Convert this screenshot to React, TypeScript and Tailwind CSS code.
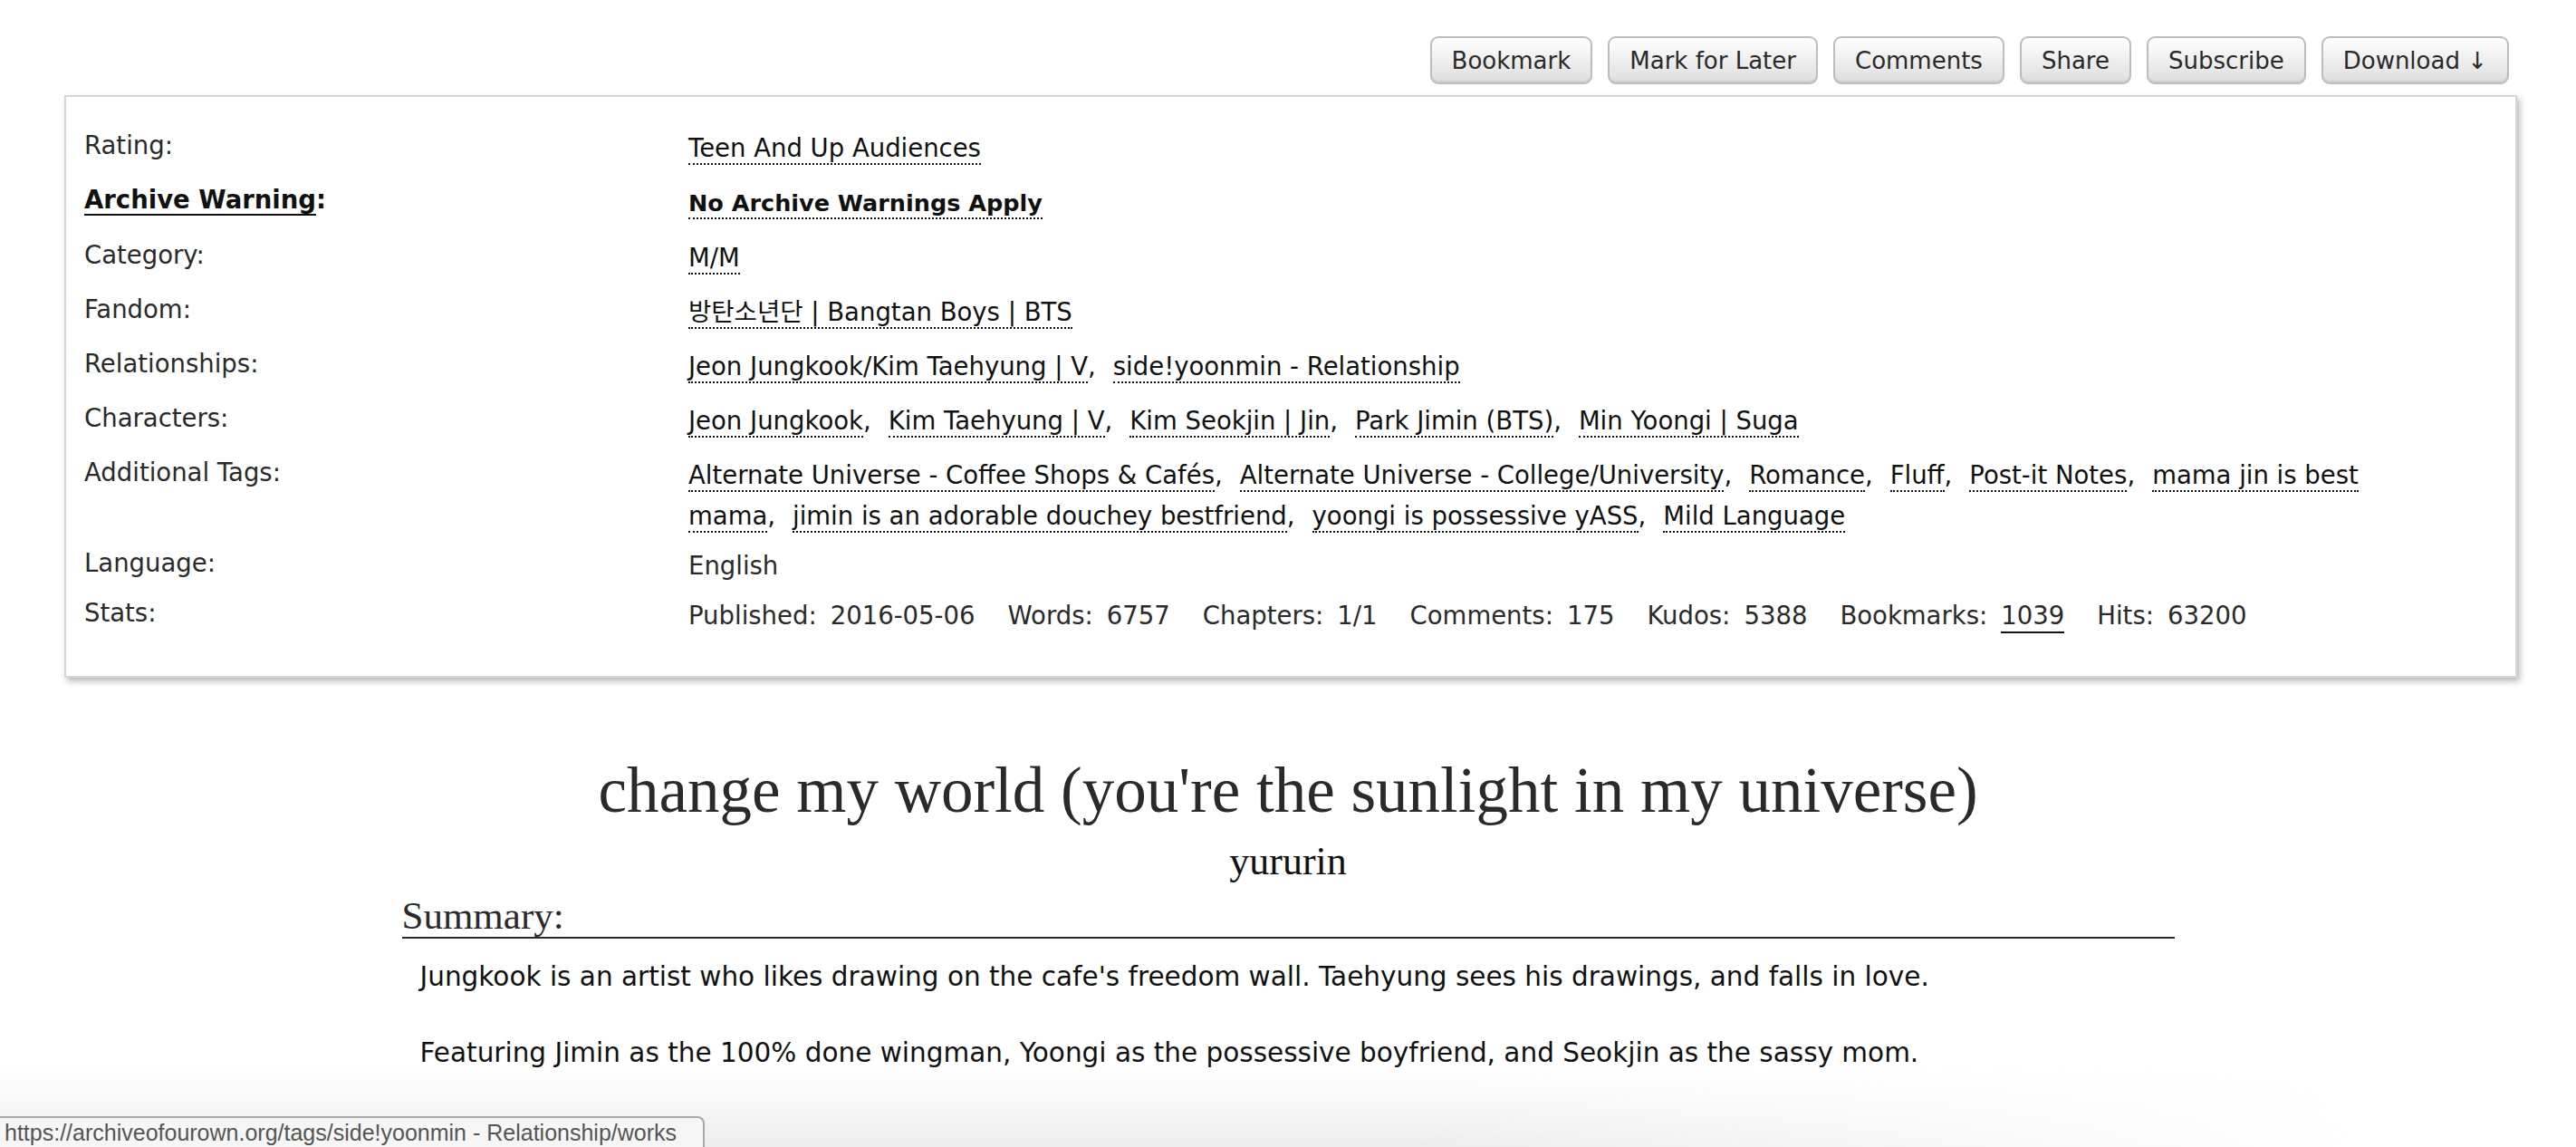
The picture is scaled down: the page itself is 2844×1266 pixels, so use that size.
import React from "react";

const sans = "font-['DejaVu_Sans','Noto_Sans_CJK_KR',sans-serif]";

function ActionButton({ label }: { label: string }) {
    return (
        <button
            type="button"
            className="flex h-[53px] items-center rounded-[9px] border-2 border-[#bdbdbd] bg-linear-to-b from-white to-[#dedede] px-[22px] text-[26px] leading-none text-[#2a2a2a] shadow-[inset_0_-2px_0_#cfcfcf]"
        >
            {label}
        </button>
    );
}

function Tag({ children, last }: { children: React.ReactNode; last?: boolean }) {
    return (
        <span className={last ? "whitespace-nowrap" : "mr-[19px] whitespace-nowrap"}>
            <a className="border-b-2 border-dotted border-[#111] pb-[1px] text-[#111]">{children}</a>
            {last ? null : ","}
        </span>
    );
}

function Row({
    label,
    children,
    className,
}: {
    label: React.ReactNode;
    children: React.ReactNode;
    className?: string;
}) {
    return (
        <div className={"grid grid-cols-[667px_1fr] " + (className ?? "mt-[12px]")}>
            <div className="leading-[45px] text-[#2a2a2a]">{label}</div>
            <div className="pt-[3px] leading-[45px] text-[#111]">{children}</div>
        </div>
    );
}

function Stat({ label, value, link }: { label: string; value: string; link?: boolean }) {
    return (
        <span className="mr-[36px] whitespace-nowrap">
            {label}
            <span className="ml-[15px]">
                {link ? <a className="border-b-2 border-solid border-[#111] pb-[2px]">{value}</a> : value}
            </span>
        </span>
    );
}

export default function App() {
    const buttons = ["Bookmark", "Mark for Later", "Comments", "Share", "Subscribe", "Download ↓"];

    return (
        <div className={`relative h-[1266px] w-[2844px] overflow-hidden bg-white text-[27.5px] text-[#2a2a2a] ${sans}`}>
            <div className="flex justify-end gap-[17px] pr-[74px] pt-[40px]">
                {buttons.map((b) => (
                    <ActionButton key={b} label={b} />
                ))}
            </div>

            <div className="ml-[71px] mt-[12px] w-[2708px] border-2 border-[#d6d6d6] bg-white pb-[44px] pl-[20px] pt-[31px] shadow-[3px_4px_7px_rgba(0,0,0,0.28)]">
                <Row label="Rating:" className="">
                    <Tag last>Teen And Up Audiences</Tag>
                </Row>
                <Row
                    label={
                        <span className="font-bold text-[#111]">
                            <span className="border-b-2 border-[#111]">Archive Warning</span>:
                        </span>
                    }
                >
                    <span className="text-[25.5px] font-bold">
                        <Tag last>No Archive Warnings Apply</Tag>
                    </span>
                </Row>
                <Row label="Category:">
                    <Tag last>M/M</Tag>
                </Row>
                <Row label="Fandom:">
                    <Tag last>방탄소년단 | Bangtan Boys | BTS</Tag>
                </Row>
                <Row label="Relationships:">
                    <Tag>Jeon Jungkook/Kim Taehyung | V</Tag>
                    <Tag last>side!yoonmin - Relationship</Tag>
                </Row>
                <Row label="Characters:">
                    <Tag>Jeon Jungkook</Tag>
                    <Tag>Kim Taehyung | V</Tag>
                    <Tag>Kim Seokjin | Jin</Tag>
                    <Tag>Park Jimin (BTS)</Tag>
                    <Tag last>Min Yoongi | Suga</Tag>
                </Row>
                <Row label="Additional Tags:">
                    <div className="whitespace-nowrap">
                        <Tag>Alternate Universe - Coffee Shops &amp; Cafés</Tag>
                        <Tag>Alternate Universe - College/University</Tag>
                        <Tag>Romance</Tag>
                        <Tag>Fluff</Tag>
                        <Tag>Post-it Notes</Tag>
                        <Tag last>mama jin is best</Tag>
                    </div>
                    <div className="whitespace-nowrap">
                        <Tag>mama</Tag>
                        <Tag>jimin is an adorable douchey bestfriend</Tag>
                        <Tag>yoongi is possessive yASS</Tag>
                        <Tag last>Mild Language</Tag>
                    </div>
                </Row>
                <Row label="Language:" className="mt-[7px]">
                    <span className="text-[#2a2a2a]">English</span>
                </Row>
                <Row label="Stats:" className="mt-[7px]">
                    <span className="text-[#2a2a2a]">
                        <Stat label="Published:" value="2016-05-06" />
                        <Stat label="Words:" value="6757" />
                        <Stat label="Chapters:" value="1/1" />
                        <Stat label="Comments:" value="175" />
                        <Stat label="Kudos:" value="5388" />
                        <Stat label="Bookmarks:" value="1039" link />
                        <Stat label="Hits:" value="63200" />
                    </span>
                </Row>
            </div>

            <div className="mx-auto w-[1957px]">
                <h2 className="mt-[89px] text-center font-['Liberation_Serif',serif] text-[71px] leading-none font-normal text-[#2a2a2a]">
                    change my world (you're the sunlight in my universe)
                </h2>
                <h3 className="mt-[21px] text-center font-['Liberation_Serif',serif] text-[44px] leading-none text-[#111]">
                    yururin
                </h3>
                <h3 className="mt-[16px] border-b-2 border-[#2a2a2a] pb-[2px] font-['Liberation_Serif',serif] text-[43px] leading-none text-[#2a2a2a]">
                    Summary:
                </h3>
                <div className="pl-[20px] text-[29.5px] text-[#111]">
                    <p className="mt-[20px] leading-[45px]">
                        Jungkook is an artist who likes drawing on the cafe's freedom wall. Taehyung sees his drawings, and falls in love.
                    </p>
                    <p className="mt-[39px] leading-[45px]">
                        Featuring Jimin as the 100% done wingman, Yoongi as the possessive boyfriend, and Seokjin as the sassy mom.
                    </p>
                </div>
            </div>

            <div className="pointer-events-none absolute bottom-0 left-0 h-[90px] w-[2600px] bg-linear-to-b from-white/0 to-[#ededed] [mask-image:linear-gradient(to_right,black_60%,transparent)]" />

            <div className="absolute bottom-0 left-0 h-[34px] w-[778px] rounded-tr-[8px] border-2 border-b-0 border-l-0 border-[#a8a8a8] bg-[#f6f6f6] pl-[5px] font-['Liberation_Sans',sans-serif] text-[25px] leading-[32px] whitespace-nowrap text-[#555]">
                https://archiveofourown.org/tags/side!yoonmin - Relationship/works
            </div>
        </div>
    );
}
